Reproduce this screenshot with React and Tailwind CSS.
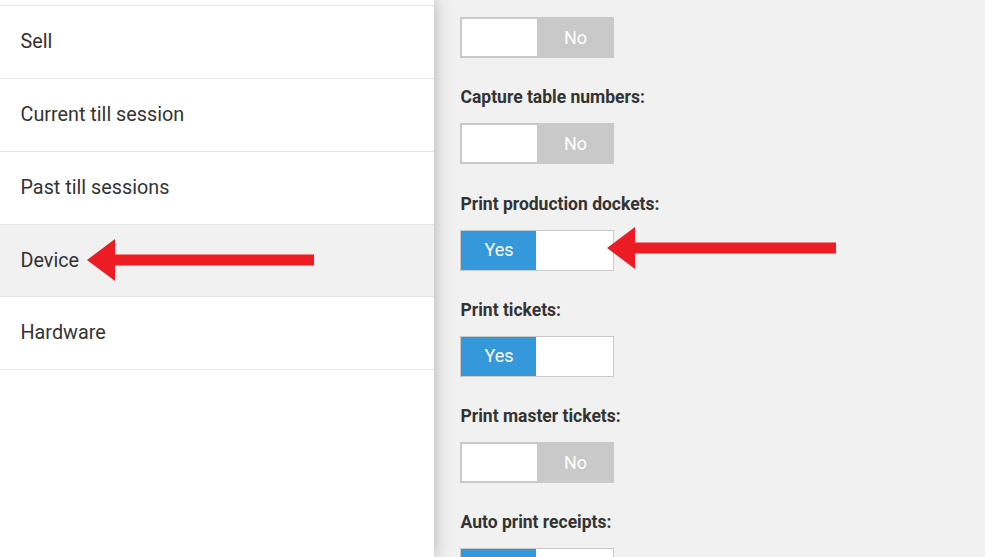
const menu = ["Sell", "Current till session", "Past till sessions", "Device", "Hardware"];

const settings = [
  { label: "Capture table numbers:", on: false },
  { label: "Print production dockets:", on: true },
  { label: "Print tickets:", on: true },
  { label: "Print master tickets:", on: false },
  { label: "Auto print receipts:", on: true },
];

function Toggle({ on }) {
  if (on) {
    return (
      <div className="flex h-[41px] w-[154px] border border-[#c9c9c9] bg-white text-[18px] text-white">
        <div className="flex w-[75px] items-center justify-center bg-[#3498db] pb-[1px] pl-[1px]">Yes</div>
        <div className="flex-1" />
      </div>
    );
  }
  return (
    <div className="flex h-[41px] w-[154px] border-2 border-r-0 border-[#c9c9c9] bg-white text-[18px] text-white">
      <div className="w-[75px]" />
      <div className="flex flex-1 items-center justify-center bg-[#c9c9c9]">No</div>
    </div>
  );
}

function Arrow({ className, length }) {
  return (
    <svg className={className} width={length} height="44" viewBox={`0 0 ${length} 44`}>
      <path d={`M0 22 L28 1 L28 16.5 L${length} 16.5 L${length} 27.5 L28 27.5 L28 43 Z`} fill="#ed1c24" />
    </svg>
  );
}

export default function App() {
  return (
    <div className="relative flex h-[557px] w-[985px] overflow-hidden bg-[#f1f1f1] font-['Roboto',sans-serif] text-[#333333]">
      <div className="relative z-10 h-full w-[434px] bg-white pt-[5.2px] shadow-[0_0_16px_rgba(0,0,0,0.28)]">
        <ul className="border-t border-[#e5e5e5]">
          {menu.map((item) => (
            <li
              key={item}
              className={`flex h-[72.8px] items-center border-b border-[#e5e5e5] pl-[20.5px] text-[19.8px] ${
                item === "Device" ? "bg-[#f1f1f1]" : ""
              }`}
            >
              {item}
            </li>
          ))}
        </ul>
      </div>

      <div className="flex-1 pl-[26px] pt-[17px]">
        <Toggle on={false} />
        {settings.map((s) => (
          <div key={s.label} className="mt-[24.25px]">
            <div className="mb-[11px] h-[30px] pl-[0.5px] text-[17.5px] leading-[30px] font-bold">{s.label}</div>
            <Toggle on={s.on} />
          </div>
        ))}
      </div>

      <Arrow className="absolute top-[238px] left-[87px] z-20" length={227} />
      <Arrow className="absolute top-[226px] left-[607px] z-20" length={229} />
    </div>
  );
}
